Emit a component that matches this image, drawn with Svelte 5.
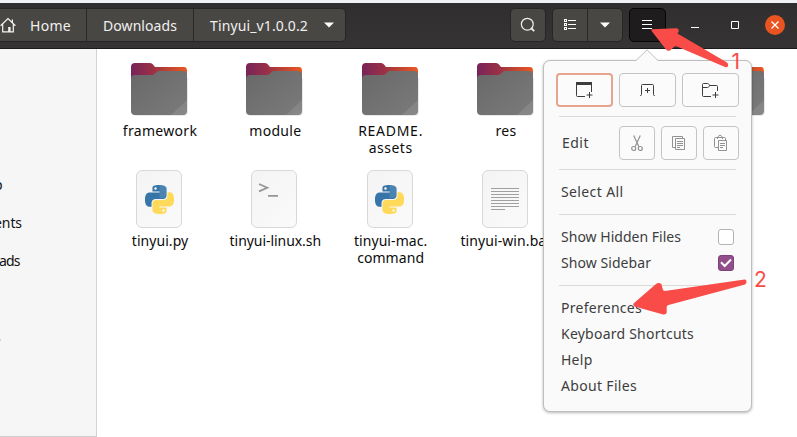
<script>
  // Spreads the glyphs of a label evenly so that it takes up the given width.
  function fit(node, width) {
    const range = document.createRange();
    range.selectNodeContents(node);
    const natural = range.getBoundingClientRect().width;
    const n = node.textContent.length;
    const spacing = (width - natural) / n;
    node.style.letterSpacing = `${spacing}px`;
  }

  const files = [
    { kind: 'folder', lines: [['framework', 74.5]] },
    { kind: 'folder', lines: [['module', 52]] },
    { kind: 'folder', lines: [['README.', 65], ['assets', 44]] },
    { kind: 'folder', lines: [['res', 21]] },
    { kind: 'folder', lines: [] },
    { kind: 'folder', lines: [] },
    { kind: 'python', lines: [['tinyui.py', 56.5]] },
    { kind: 'shell', lines: [['tinyui-linux.sh', 91.5]] },
    { kind: 'python', lines: [['tinyui-mac.', 73.5], ['command', 67]] },
    { kind: 'text', lines: [['tinyui-win.bat', 91]] }
  ];
  const checks = [
    { label: 'Show Hidden Files', width: 120, on: false },
    { label: 'Show Sidebar', width: 90, on: true }
  ];
  const links = [['Preferences', 81], ['Keyboard Shortcuts', 133], ['Help', 31.5], ['About Files', 76]];
  const snake =
    'M14.25.18l.9.2.73.26.59.3.45.32.34.34.25.34.16.33.1.3.04.26.02.2-.01.13V8.5l-.05.63-.13.55-.21.46-.26.38-.3.31-.33.25-.35.19-.35.14-.33.1-.3.07-.26.04-.21.02H8.77l-.69.05-.59.14-.5.22-.41.27-.33.32-.27.35-.2.36-.15.37-.1.35-.07.32-.04.27-.02.21v3.06H3.17l-.21-.03-.28-.07-.32-.12-.35-.18-.36-.26-.36-.36-.35-.46-.32-.59-.28-.73-.21-.88-.14-1.05-.05-1.23.06-1.22.16-1.04.24-.87.32-.71.36-.57.4-.44.42-.33.42-.24.4-.16.36-.1.32-.05.24-.01h.16l.06.01h8.16v-.83H6.18l-.01-2.75-.02-.37.05-.34.11-.31.17-.28.25-.26.31-.23.38-.2.44-.18.51-.15.58-.12.64-.1.71-.06.77-.04.84-.02 1.27.05zm-6.3 1.98l-.23.33-.08.41.08.41.23.34.33.22.41.09.41-.09.33-.22.23-.34.08-.41-.08-.41-.23-.33-.33-.22-.41-.09-.41.09z';
</script>

<div class="screen">
  <header>
    <nav class="path">
      <div class="crumb home">
        <svg width="16" height="16" viewBox="0 0 16 16" fill="none" stroke="#f4f4f3" stroke-width="1.2">
          <path d="M.6 8.8 8 1.5l7.4 7.3M2.7 7v7.9h10.6V7M12.4 2.5v3" />
          <path d="M8.2 10h2.4v5H8.2z" fill="#f4f4f3" stroke="none" />
        </svg>
        <span use:fit={41}>Home</span>
      </div>
      <div class="crumb downloads"><span use:fit={74}>Downloads</span></div>
      <div class="crumb current">
        <span use:fit={98}>Tinyui_v1.0.0.2</span>
        <svg width="10" height="6" viewBox="0 0 10 6"><path d="M0 .4h10L5 5.6z" fill="#fff" /></svg>
      </div>
    </nav>
    <div class="tools">
      <div class="tool">
        <svg width="16" height="16" viewBox="0 0 16 16" fill="none" stroke="#f0f0ef">
          <circle cx="7.3" cy="7.2" r="5.9" stroke-width="1.2" />
          <path d="m11 11 3.2 3.2" stroke-width="1.8" />
        </svg>
      </div>
      <div class="pair">
        <div>
          <svg width="14" height="14" viewBox="0 0 14 14" fill="none" stroke="#fff" shape-rendering="crispEdges">
            <path d="M1.5 1.5h2v2h-2zM1.5 5.5h2v2h-2zM1.5 9.5h2v2h-2zM5 2.5h8M5 6.5h8M5 10.5h8" />
          </svg>
        </div>
        <div>
          <svg width="10" height="6" viewBox="0 0 10 6"><path d="M0 .4h10L5 5.6z" fill="#fff" /></svg>
        </div>
      </div>
      <div class="tool active">
        <svg width="10" height="10" viewBox="0 0 10 10" stroke="#fff" shape-rendering="crispEdges">
          <path d="M0 .5h10M0 4.5h10M0 8.5h10" />
        </svg>
      </div>
    </div>
    <svg class="window" width="100" height="22" viewBox="0 0 100 22" fill="none" stroke="#fff">
      <path d="M6 13.5h8M46.5 7.5h7v7h-7z" />
      <circle cx="90" cy="11" r="10" fill="#e95420" stroke="none" />
      <path d="m86.5 7.5 7 7m0-7-7 7" stroke-width="1.3" />
    </svg>
  </header>

  <div class="body">
    <aside>
      <div><span class="desk">p</span></div>
      <div><span class="docs" use:fit={28}>ents</span></div>
      <div><span class="down" use:fit={20.5}>ads</span></div>
      <i></i>
    </aside>
    <main>
      {#each files as file, i}
        <div class="file">
          <div class="icon">
            {#if file.kind === 'folder'}
              <svg width="60" height="56" viewBox="-2 -2 60 56">
                <defs>
                  <linearGradient id="back{i}" x1="0" y1="0" x2="1" y2="0">
                    <stop offset="0" stop-color="#772459" />
                    <stop offset=".4" stop-color="#9c3046" />
                    <stop offset=".6" stop-color="#b64035" />
                    <stop offset="1" stop-color="#ea5822" />
                  </linearGradient>
                  <linearGradient id="front{i}" x1="0" y1="0" x2="1" y2="1">
                    <stop offset="0" stop-color="#686868" />
                    <stop offset="1" stop-color="#7b7b7b" />
                  </linearGradient>
                </defs>
                <path d="M1 17v32q0 4 4 4h47q5 0 5-5V15z" fill="#000" opacity=".09" />
                <path d="M0 4q0-4 4-4h15q2 0 3 1.5L24 4h29q3 0 3 4v20H0z" fill="url(#back{i})" />
                <path d="M0 16q0-4 4-4h17q2 0 3-1.4l1.5-1.3Q26.500 8 28 8h24q4 0 4 4v36q0 4-4 4H4q-4 0-4-4z" fill="url(#front{i})" />
                <path d="M56 37v11q0 4-4 4H40z" fill="#fff" opacity=".1" />
              </svg>
            {:else}
              <div class="sheet">
                {#if file.kind === 'python'}
                  <svg width="29" height="29" viewBox="0 0 24 24">
                    <path d={snake} fill="#3775a9" />
                    <path d={snake} fill="#ffd95a" transform="rotate(180 12 12)" />
                    <path d="M12 0h2.250l2.200.9 1.200 1.500V8.500q-.4 2.200-2.500 2.500H12z" fill="#fff" opacity=".1" />
                  </svg>
                {:else if file.kind === 'shell'}
                  <svg width="44" height="56" viewBox="0 0 44 56" fill="none" stroke="#969696" stroke-width="1.8">
                    <path d="m7 13 8.300 3.700L7 20.400M16 24.900h10" />
                  </svg>
                {:else}
                  <svg width="28" height="24" viewBox="0 0 28 24" stroke="#a0a0a0" shape-rendering="crispEdges">
                    <path d="M0 1.500h28M0 4.500h28M0 7.500h28M0 10.500h28M0 13.500h28M0 16.500h28M0 19.500h28M0 22.500h14" />
                  </svg>
                {/if}
              </div>
            {/if}
          </div>
          {#each file.lines as [text, width]}
            <div class="label"><span use:fit={width}>{text}</span></div>
          {/each}
        </div>
      {/each}
    </main>
  </div>

  <section class="menu">
    <svg class="beak" width="24" height="13" viewBox="0 0 24 13">
      <path d="M0 13v-1.500h1L12 .8l11 10.700h1V13z" fill="#fafafa" />
      <path d="M0 11.500h1L12 .8l11 10.700h1" fill="none" stroke="#bebebe" />
    </svg>
    <div class="row">
      <div class="button wide focus">
        <svg width="19" height="16" viewBox="0 0 19 16" fill="none" stroke="#3d3d3d">
          <path d="M10 14.500H2.500q-1 0-1-1V2M16.500 2v8M14.500 10v6M11.500 13h6" />
          <path d="M1 0h16v3H1z" fill="#3d3d3d" stroke="none" />
        </svg>
      </div>
      <div class="button wide">
        <svg width="15" height="12" viewBox="0 0 15 12" fill="none" stroke="#3d3d3d">
          <path d="M0 11.500h.5q1 0 1-1v-9q0-1 1-1h10q1 0 1 1v9q0 1 1 1h.5M7.500 4v5M5 6.500h5" />
        </svg>
      </div>
      <div class="button wide">
        <svg width="19" height="16" viewBox="0 0 19 16" fill="none" stroke="#3d3d3d">
          <path d="M10 14.500H2.500q-1 0-1-1v-11q0-1 1-1h4q1 0 1.500 1l.5 1h7q1 0 1 1V9M1.500 5.500h5q1 0 1.500-1l.5-1M14.500 10v6M11.500 13h6" />
        </svg>
      </div>
    </div>
    <hr />
    <div class="row">
      <span class="edit" use:fit={27}>Edit</span>
      <div class="button">
        <svg width="12" height="17" viewBox="0 0 12 17" fill="none" stroke="#929292" stroke-width="1.200">
          <path d="M2.700.5 7.900 11.800M9.300.5 4.100 11.800" />
          <circle cx="2.700" cy="13.500" r="2" /><circle cx="9.300" cy="13.500" r="2" />
        </svg>
      </div>
      <div class="button">
        <svg width="14" height="14" viewBox="0 0 14 14" fill="none" stroke="#929292">
          <path d="M3.500 2.500h9v11h-9zM10.500 2.500v-2H.5v11h3M5 5.500h6M5 7.500h6M5 9.500h6M5 11.500h3" />
        </svg>
      </div>
      <div class="button">
        <svg width="14" height="16" viewBox="0 0 14 16" fill="none" stroke="#929292">
          <path d="M4.500 5.500h8v10h-8zM4.500 12.500h-3q-1 0-1-1v-8q0-1 1-1h9q1 0 1 1v2M3.500 4V2.500l1.500-2h2l1.500 2V4M6 8.500h5M6 10.500h5M6 12.500h3" />
        </svg>
      </div>
    </div>
    <hr />
    <div class="item"><span use:fit={62.5}>Select All</span></div>
    <hr />
    {#each checks as item}
      <div class="item">
        <span use:fit={item.width}>{item.label}</span>
        <div class="check" class:on={item.on}>
          {#if item.on}
            <svg width="12" height="10" viewBox="0 0 12 10"><path d="m1 4.300 3.700 3.700L11 1.500" fill="none" stroke="#fff" stroke-width="2" /></svg>
          {/if}
        </div>
      </div>
    {/each}
    <hr />
    {#each links as [text, width]}
      <div class="item"><span use:fit={width}>{text}</span></div>
    {/each}
  </section>

  <svg class="notes" width="797" height="437" viewBox="0 0 797 437">
    <path d="M651.500 29.300 676 28.300Q679.500 28.500 678.500 32l-1 1q.5 1.500 3 2.200L727 62.500q1.800 1.500 1 3.500t-3 1L677 46.500q-1.500-.8-2.800.3L670 50.500q-2.500 1-4-1L652 31.500q-1-1.500-.5-2.200z" />
    <path d="M633.500 303.500 656 284q3-2 5.500.3l1.300 5q.2 1.700 2 1.700L744.500 279.500q2-.1 2 2t-1.500 3L668.500 305q-2 .5-1.800 2.300v5.200q-.7 2.500-3.500 2L634.500 306.500q-2-1.300-1-3z" />
    <text x="731.500" y="68.500">1</text>
    <text x="754" y="287">2</text>
  </svg>
</div>

<style>
  .screen {
    position: relative;
    width: 797px;
    height: 437px;
    overflow: hidden;
    background: #fff;
    font: 14px/17px 'Noto Sans', sans-serif;
    box-sizing: border-box;
    border-top: 3px solid #f0f1f5;
    display: flex;
    flex-direction: column;
  }
  .screen * { box-sizing: border-box; }
  span { white-space: pre; }
  svg { display: block; flex: none; }
  header {
    display: flex;
    align-items: flex-start;
    height: 46px;
    flex: none;
    padding-top: 5px;
    background: linear-gradient(#302e2e, #353333);
    border-bottom: 1px solid #1c1a1a;
    color: #f0f0ef;
  }
  .path { display: flex; width: 346px; height: 34px; border: 1px solid #272525; border-left: 0; border-radius: 0 5px 5px 0; background: #494744; }
  .crumb { display: flex; align-items: center; border-right: 1px solid #2b2928; }
  .home { width: 87px; gap: 14px; }
  .downloads { width: 107px; padding-left: 16px; }
  .current { padding-left: 16px; gap: 16px; border: 0; }
  .tools { display: flex; margin-left: 164px; }
  .tool, .pair { height: 34px; border: 1px solid #272525; border-radius: 5px; background: #494744; }
  .tool { width: 36px; display: flex; align-items: center; justify-content: center; }
  .pair { width: 71px; margin: 0 6px; display: flex; }
  .pair div { flex: 1; display: flex; align-items: center; justify-content: center; }
  .pair div + div { border-left: 1px solid #2b2928; }
  .active { width: 37px; padding-right: 1px; background: #1e1c1c; border-color: #050505; }
  .window { margin: 6px 0 0 19px; }
  .body { display: flex; flex: 1; min-height: 0; }
  aside { width: 97px; flex: none; background: #f6f6f6; border-right: 1px solid #d3d3d3; border-bottom: 1px solid #cfcfcf; padding-top: 116px; overflow: hidden; color: #111; }
  aside div { height: 38px; display: flex; align-items: center; }
  .desk { margin-left: -6px; }
  .docs { margin-left: -6px; }
  .down { margin-left: -1px; }
  aside i { display: block; width: 1px; height: 2px; margin-top: 60px; background: #b7dcf2; }
  main { display: grid; grid-template-columns: repeat(6, 115.3px); grid-auto-rows: 110px; padding: 11px 0 0 4.4px; align-content: start; color: #0c0c0c; }
  .file { display: flex; flex-direction: column; align-items: center; }
  .icon { height: 58px; display: flex; align-items: center; margin-bottom: 4px; }
  .label { height: 17px; padding-left: 2px; }
  .sheet { width: 46px; height: 58px; border: 1px solid #d8d8d8; border-radius: 6px; background: linear-gradient(135deg, #f4f4f4, #fafafa); display: flex; align-items: center; justify-content: center; }
  .menu { position: absolute; left: 543px; top: 57px; width: 209px; height: 352px; padding: 12px 12px 0; border: 1px solid #bebebe; border-radius: 7px; background: #fafafa; box-shadow: 0 1px 3px rgba(0, 0, 0, 0.28); color: #3d3d3d; }
  .beak { position: absolute; left: 91px; top: -12px; }
  .row { display: flex; gap: 6px; height: 34px; align-items: center; }
  .edit { width: 57px; padding: 0 0 2px 6px; }
  .button { width: 36px; height: 34px; display: flex; align-items: center; justify-content: center; border: 1px solid #c4c4c4; border-radius: 4px; background: #fbfbfb; }
  .wide { width: 57px; }
  .focus { border: 2px solid #e6a68e; }
  hr { height: 1px; border: 0; background: #dadada; margin: 9px 3px; }
  .item { height: 26px; display: flex; align-items: center; justify-content: space-between; padding: 0 5px; }
  .item span { padding-bottom: 2px; }
  .check { width: 16px; height: 16px; border: 1px solid #b4b4b4; border-radius: 3px; background: #fff; display: flex; align-items: center; justify-content: center; }
  .on { background: #924d8b; border-color: #7d4278; }
  .notes { position: absolute; left: 0; top: -3px; fill: #f94b47; font: 21px Inter, sans-serif; }
</style>
